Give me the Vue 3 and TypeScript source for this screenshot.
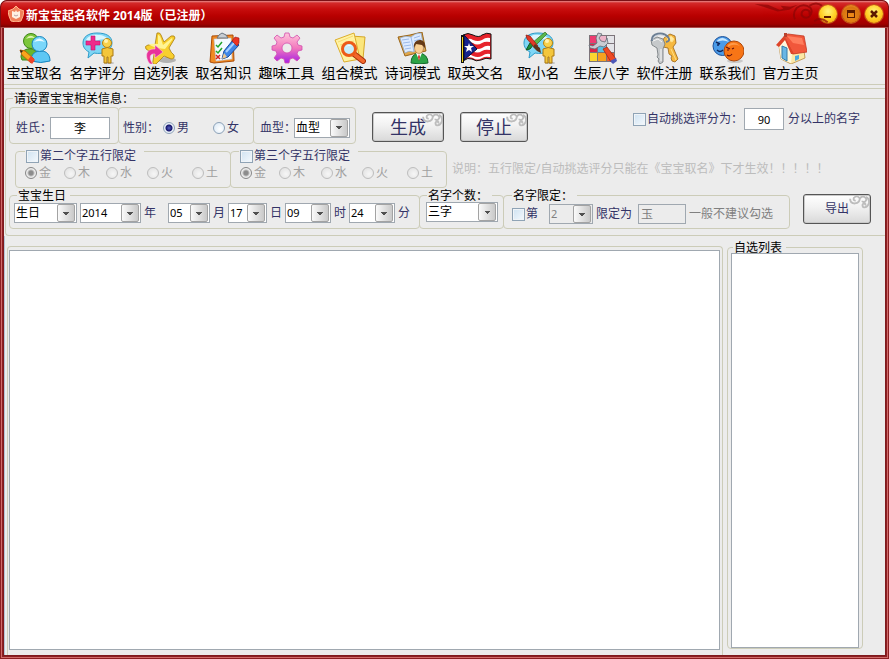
<script setup lang="ts">
import { ref } from 'vue'

interface Tool {
  label: string
  art: string
}

const bubble =
  '<path d="M15 1C6 1 1 5 1 11c0 4 2 7 6 9l-1 6 6-5c10 2 18-3 18-10S24 1 15 1Z" fill="#7fd6f5" stroke="#2c9cc9"/><path d="M4 8c2-4 7-6 12-5 5 0 9 2 10 5-7-3-15 4-22 0Z" fill="#d9f6ff"/>'
const figure =
  '<ellipse cx="27" cy="31" rx="5" ry="1" fill="#999" opacity=".6"/><path d="M20 17q5-3 11 0v7h-2v7h-3v-6h-1v6h-3v-7h-2Z" fill="#f3c63c" stroke="#a97913"/><circle cx="25" cy="11" r="4.5" fill="#f8d14b" stroke="#b98312"/><circle cx="24" cy="9" r="2" fill="#fff2b0"/>'

const tools: Tool[] = [
  {
    label: '宝宝取名',
    art: '<path d="M2 25c0-6 5-9 11-8l6 3-5 8H3Z" fill="#69b52c" stroke="#3d8417"/><circle cx="12" cy="9" r="7.5" fill="#7cc63a" stroke="#3d8417"/><path d="M7 7q4-6 9-1-5-1-9 1Z" fill="#dff5b4"/><path d="M12 29c0-7 4-10 10-10s9 4 9 10q-9 3-19 0Z" fill="#5ec7f4" stroke="#1683bd"/><circle cx="20.500" cy="12" r="7.500" fill="#7ad7fa" stroke="#1683bd"/><path d="M15 10q5-7 11 0-6-2-11 0Z" fill="#e8fbff"/><path d="M1 18l5 1 9 8-3 4-9-8Z" fill="#f9a51c" stroke="#bd6508"/><path d="M1 18l3 1-2 2Z" fill="#222"/><path d="M12 24l4 4-3 4-4-4Z" fill="#ef4128"/>',
  },
  {
    label: '名字评分',
    art: bubble + '<path d="M9 4h4v5h5v4h-5v5H9v-5H4V9h5Z" fill="#ee2b8c" stroke="#c01468" stroke-width=".6"/>' + figure,
  },
  {
    label: '自选列表',
    art: '<ellipse cx="22" cy="28" rx="9" ry="3" fill="#777" opacity=".5"/><path d="M12 1q3-1 4 2l3 7 7-6q4-1 4 2l-6 10q2 5 5 7 1 4-3 4l-7-3-3 3-5 5q-4 1-3-3l1-7-8-5q-2-3 2-4l7 0Z" fill="#f8cf2e" stroke="#a97d10" stroke-width=".8" stroke-linejoin="round"/><path d="M13 3q2 0 3 4l2 6 9-7q1 1 0 2l-7 9-8-1-8-3q0-2 9-1Z" fill="#fff493"/><path d="M5 32C-1 25 1 16 10 17v-4l8 7-8 6v-4c-6-1-6 5-2 10Z" fill="#e8329a" stroke="#fbd3e8" stroke-width=".5"/>',
  },
  {
    label: '取名知识',
    art: '<path d="M4 4l21-1 1 26-20 2-4-1Z" fill="#f18a22" stroke="#a94c08"/><path d="M6 7l17-1 1 21-16 2Z" fill="#f5faff" stroke="#b7c5d4" stroke-width=".6"/><path d="M9 6l2-3 3-2 4 2 2 3Z" fill="#c8ced4" stroke="#69747f"/><path d="M8 13l2 2 4-5M8 19l2 2 4-5" fill="none" stroke="#22a52b" stroke-width="1.500"/><path d="M8 23l4 4m0-4l-4 4" stroke="#d42222" stroke-width="1.500"/><path d="M14 27l2-8L25 8l6 5-11 12Z" fill="#3f86e8" stroke="#144a9e"/><path d="M18 20l9-10" stroke="#a7d1ff" stroke-width="2"/><path d="M24 9l3-4 4 1v5l-2 3Z" fill="#ec3323" stroke="#9c160c" stroke-width=".6"/><path d="M14 27l2-6 3 4Z" fill="#edc68d"/>',
  },
  {
    label: '趣味工具',
    art: '<defs><linearGradient id="gear" x1="0" y1="0" x2="0" y2="1"><stop offset="0" stop-color="#ffc6dc"/><stop offset=".5" stop-color="#f279bd"/><stop offset="1" stop-color="#a61fe4"/></linearGradient></defs><path d="M13 5l1-4h4l1 4 3 1 4-3 3 3-3 4 1 3 4 1v4l-4 1-1 3 3 4-3 3-4-3-3 1-1 4h-4l-1-4-3-1-4 3-3-3 3-4-1-3-4-1v-4l4-1 1-3-3-4 3-3 4 3Zm3 6a5 5 0 100 10 5 5 0 000-10Z" fill="url(#gear)" stroke="#d24fae" stroke-width=".8" fill-rule="evenodd"/>',
  },
  {
    label: '组合模式',
    art: '<path d="M17 4l14 1-2 22-12 1Z" fill="#fbe67c" stroke="#d5a726"/><path d="M1 8l19-7 6 26-16 3Z" fill="#fff3a3" stroke="#dcae2d"/><path d="M4 10l15-6M6 13l14-4" stroke="#f7dc71"/><path d="M20 22l9 7" stroke="#a5300a" stroke-width="6" stroke-linecap="round"/><path d="M20 22l9 7" stroke="#f3682c" stroke-width="4" stroke-linecap="round"/><circle cx="15" cy="17" r="6.500" fill="#c8eefa" stroke="#ec5b18" stroke-width="3"/><path d="M11 16q3-5 7-2-5-1-7 2Z" fill="#fff"/>',
  },
  {
    label: '诗词模式',
    art: '<path d="M1 5l12-2 12-3 4 19-13 3-8 2Z" fill="#e1a84c" stroke="#9a6518"/><path d="M3 6q6-3 11-1 4-4 10-4l3 16q-8 0-11 3-4-2-8 1Z" fill="#dceafe" stroke="#7e9fcb" stroke-width=".6"/><path d="M14 5l3 15M5 8l7-1M6 11l7-1M7 14l7-1M8 17l6-1M17 6l6-2M17 9l7-2M18 12l7-2" stroke="#9dbbe9"/><path d="M14 31q0-9 8-10 9 1 9 10-8 2-17 0Z" fill="#2ca446" stroke="#13682a"/><path d="M19 21l3 7 3-7Z" fill="#fff"/><path d="M22 22l-1 3 1 4 1-4Z" fill="#d52b21"/><ellipse cx="22" cy="16" rx="4.500" ry="5.500" fill="#f9cf92" stroke="#a26b30" stroke-width=".6"/><path d="M17 16c-2-10 13-11 11 0l-3-3-6-1Z" fill="#643916"/>',
  },
  {
    label: '取英文名',
    art: '<path d="M3 3q5-3 10 0 6 3 9 0 5-3 9-1v25q-5-2-10 1-5 2-9-1-4-2-9 2Z" fill="#e6232b" stroke="#111"/><path d="M4 9q5-4 9-1 5 2 9 0 4-3 8-2v4q-5-1-8 1-5 3-9 0-5-2-9 1ZM4 17q5-4 9-1 5 2 9 0 4-3 8-2v4q-5-1-8 1-5 3-9 0-5-2-9 1ZM4 25q5-4 9-1 5 2 9 0 4-3 8-2v3q-5-1-8 1-5 3-9 0-5-2-9 1Z" fill="#fff"/><path d="M4 3l13 14L4 28Z" fill="#15248c" stroke="#080d3b"/><path d="M9 11l1 3h4l-3 2 1 4-3-2-3 2 1-4-3-2h4Z" fill="#fff"/><path d="M1 3h3v28H1Z" fill="#111"/><path d="M2 5h1v25H2Z" fill="#f4d51b"/>',
  },
  {
    label: '取小名',
    art: bubble + '<path d="M3 18l4-7 3-2 1 3-4 5Z" fill="#1a913b" stroke="#0e5721"/><path d="M9 11L22 0l2 2-12 12Z" fill="#5ab84b" stroke="#326f24" stroke-width=".7"/><path d="M3 3l4 1 8 10-3 2L4 7Z" fill="#e13827" stroke="#8e160c" stroke-width=".7"/><path d="M12 12l5 4 1 5-4-2-4-4Z" fill="#5c341c"/>' + figure,
  },
  {
    label: '生辰八字',
    art: '<path d="M3 3h26v27H3Z" fill="#7c747a"/><path d="M4 4h7v7H4Z" fill="#ed3c70"/><path d="M12 4h8v7h-8Z" fill="#edb3c8"/><path d="M21 4h7v7h-7ZM21 12h7v8h-7Z" fill="#e4e4e8"/><path d="M4 12h7v8H4Z" fill="#db2348"/><path d="M12 12h8v8h-8Z" fill="#59bfe2"/><path d="M4 21h7v8H4Z" fill="#fbd530"/><path d="M12 21h8v8h-8Z" fill="#f6a220"/><path d="M21 21h7v8h-7Z" fill="#ed5a2d"/><path d="M12 1l4 1-3 4 2 3 4 1 2-4 1 5-4 4-4-1-5 3-5-1-1-3 4 1 4-3-1-5Z" fill="#c9cdd3" stroke="#646b75" stroke-width=".8"/><path d="M17 17l4-2 9 12-5 3Z" fill="#ee4924" stroke="#a41f0d" stroke-width=".7"/><path d="M24 29l6-3 1 3-4 3Z" fill="#4c58b8"/>',
  },
  {
    label: '软件注册',
    art: '<path d="M16 5l5-3 5 2 1 7-3 4 5 12-3 3-3-1-1-3 1-2-3-2-1-6-5-1-2-5Z" fill="#f6b840" stroke="#9a6414" stroke-width=".8"/><path d="M18 7l4-3 3 3-2 3ZM22 17l5 11" fill="#ffe9a1" stroke="#ffdf86"/><path d="M2 8l6-3 6 2 2 5-2 5v13l-3 2-2-3 1-2-2-2 1-2-1-7-5-3Z" fill="#c6c9cb" stroke="#6f7578" stroke-width=".8"/><path d="M12 17v12M4 9l5-2 4 3" stroke="#f7f7f7" fill="none"/><path d="M3 9C2 1 14-1 19 5q3 4-2 5" fill="none" stroke="#6c7f94" stroke-width="2"/><path d="M4 8C4 2 14 1 18 6" fill="none" stroke="#b6c6d7" stroke-width=".7"/>',
  },
  {
    label: '联系我们',
    art: '<ellipse cx="23" cy="29" rx="8" ry="2" fill="#999" opacity=".4"/><circle cx="10.500" cy="14" r="9.500" fill="#4a9be8" stroke="#1a5099"/><path d="M4 10q6-8 13 0-6-3-13 0Z" fill="#c5e6ff"/><path d="M4 10l4 2M5 13h2M5 18q3 3 6 0" stroke="#10275d" fill="none" stroke-width="1.500"/><circle cx="22" cy="19" r="10" fill="#f77516" stroke="#ae470a"/><path d="M16 13q6-5 12 1-7-3-12 1Z" fill="#ff9a48"/><path d="M14 15l4 2M15 18h2M20 17l2-1M15 23q3 2 5-1" stroke="#64130f" fill="none" stroke-width="1.200"/>',
  },
  {
    label: '官方主页',
    art: '<path d="M4 14l9 2 4 6 12-3 1 7-14 6-10-5Z" fill="#fce8a6" stroke="#b98c43" stroke-width=".8"/><path d="M4 14l5-9 8 17-1 9-10-4Z" fill="#fff8dc"/><path d="M7 14l5 2v13l-5-3Z" fill="#69b7e4" stroke="#347da9"/><path d="M20 24l4-1v4l-4 2Z" fill="#4ca9dd"/><path d="M9 4l4-2 16 2 3 16-14 2Z" fill="#f1573b" stroke="#c43a24" stroke-width=".8"/><path d="M12 4l15 2 2 7-11-2Z" fill="#ff7d5d"/><path d="M9 4L1 13l3 2 6-7 6 14 3 0Z" fill="#de4429"/><path d="M9 1h3v4H9Z" fill="#b9432f"/>',
  },
]

const elements: string[] = ['金', '木', '水', '火', '土']
const surname = ref('李')
const gender = ref('男')
const second = ref('金')
const third = ref('金')
const score = ref('90')
</script>

<template>
  <div class="window">
    <header class="titlebar">
      <svg class="logo" viewBox="0 0 16 16" aria-hidden="true">
        <path d="M8 0l3 3 5 2-1 5-2 5-5 1-5-1-2-5-1-5 5-2Z" fill="#f0805a" stroke="#ffb48c" />
        <path d="M4 5l3 1 1-2 1 2 3-1v6l-4 2-4-2Z" fill="#fff0e2" />
        <path d="M6 9l2 1 2-1" fill="none" stroke="#b9a0a6" />
      </svg>
      <h1>新宝宝起名软件 2014版（已注册）</h1>
      <svg class="clouds" viewBox="0 0 84 27" aria-hidden="true">
        <path d="M0 3l14 1 12 5 4-1-3-3 10 1 8-2-9 5-12 2-12-4Z" />
        <path class="stroke" d="M57 14q1-5-4-5-5 1-4 6 4 4 8 1 4-5 1-9-7-5-14 0-5 6-2 12M57 5q7-5 13 0M62 21q6-5 14 1M61 25h20" />
      </svg>
      <div class="controls">
        <button type="button" aria-label="最小化">
          <svg viewBox="0 0 18 18"><path d="M5 11h7v2H5Z" fill="#5b1a00" /></svg>
        </button>
        <button type="button" class="amber" aria-label="最大化">
          <svg viewBox="0 0 18 18"><path d="M5 5h8v8H5Zm1 3v4h6V8Z" fill="#5b1a00" fill-rule="evenodd" /></svg>
        </button>
        <button type="button" aria-label="关闭">
          <svg viewBox="0 0 18 18"><path d="M6 6l6 6m0-6l-6 6" stroke="#5b1a00" stroke-width="2.500" /></svg>
        </button>
      </div>
    </header>

    <div class="client">
      <nav class="toolbar">
        <button v-for="tool in tools" :key="tool.label" type="button">
          <svg viewBox="0 0 32 32" aria-hidden="true" v-html="tool.art"></svg>
          <span>{{ tool.label }}</span>
        </button>
      </nav>

      <div class="settings-wrap">
        <fieldset class="settings">
          <legend>请设置宝宝相关信息：</legend>

          <div class="row basics">
            <div class="box surname">
              <label for="surname">姓氏：</label>
              <input id="surname" v-model="surname" class="text" type="text" />
            </div>
            <div class="box gender" role="radiogroup" aria-label="性别">
              <span>性别：</span>
              <label><input v-model="gender" type="radio" name="gender" value="男" />男</label>
              <label><input v-model="gender" type="radio" name="gender" value="女" />女</label>
            </div>
            <div class="box blood">
              <label for="blood">血型：</label>
              <span class="combo"><select id="blood"><option>血型</option></select></span>
            </div>
            <button type="button" class="push big">
              生成
              <svg class="curl" viewBox="0 0 22 16" aria-hidden="true"><path d="M7 6q-3 0-2-3 3-3 6 0 1 5-5 6-5 0-5-5M11 5q1-4 5-3 4 2 1 5-3 1-3-1M18 2q4 2 3 7-2 5-6 4-2-3 1-4 2 0 1 2" /></svg>
            </button>
            <button type="button" class="push big stop">
              停止
              <svg class="curl" viewBox="0 0 22 16" aria-hidden="true"><path d="M7 6q-3 0-2-3 3-3 6 0 1 5-5 6-5 0-5-5M11 5q1-4 5-3 4 2 1 5-3 1-3-1M18 2q4 2 3 7-2 5-6 4-2-3 1-4 2 0 1 2" /></svg>
            </button>
            <div class="auto">
              <label class="check"><input type="checkbox" />自动挑选评分为：</label>
              <input id="score" v-model="score" class="text" type="text" aria-label="评分" />
              <label for="score">分以上的名字</label>
            </div>
          </div>

          <div class="row limits">
            <fieldset class="element">
              <legend><label class="check"><input type="checkbox" />第二个字五行限定</label></legend>
              <div class="choices">
                <label v-for="name in elements" :key="name">
                  <input v-model="second" type="radio" name="second" :value="name" disabled />{{ name }}
                </label>
              </div>
            </fieldset>
            <fieldset class="element">
              <legend><label class="check"><input type="checkbox" />第三个字五行限定</label></legend>
              <div class="choices">
                <label v-for="name in elements" :key="name">
                  <input v-model="third" type="radio" name="third" :value="name" disabled />{{ name }}
                </label>
              </div>
            </fieldset>
            <p class="note">说明：五行限定/自动挑选评分只能在《宝宝取名》下才生效！！！！！</p>
          </div>

          <div class="row details">
            <fieldset class="birthday">
              <legend>宝宝生日</legend>
              <div class="line">
                <span class="combo kind"><select aria-label="生日类型"><option>生日</option></select></span>
                <span class="combo num year"><select id="year"><option>2014</option></select></span>
                <label for="year">年</label>
                <span class="combo num month"><select id="month"><option>05</option></select></span>
                <label for="month">月</label>
                <span class="combo num day"><select id="day"><option>17</option></select></span>
                <label for="day">日</label>
                <span class="combo num"><select id="hour"><option>09</option></select></span>
                <label for="hour">时</label>
                <span class="combo num"><select id="minute"><option>24</option></select></span>
                <label for="minute">分</label>
              </div>
            </fieldset>
            <fieldset class="count">
              <legend>名字个数：</legend>
              <span class="combo"><select aria-label="名字个数"><option>三字</option></select></span>
            </fieldset>
            <fieldset class="restrict">
              <legend>名字限定：</legend>
              <div class="line">
                <label class="check"><input type="checkbox" />第</label>
                <span class="combo num off"><select aria-label="第几个字" disabled><option>2</option></select></span>
                <label for="word">限定为</label>
                <input id="word" class="text" type="text" value="玉" disabled />
                <span class="hint">一般不建议勾选</span>
              </div>
            </fieldset>
            <button type="button" class="push export">
              导出
              <svg class="curl" viewBox="0 0 22 16" aria-hidden="true"><path d="M7 6q-3 0-2-3 3-3 6 0 1 5-5 6-5 0-5-5M11 5q1-4 5-3 4 2 1 5-3 1-3-1M18 2q4 2 3 7-2 5-6 4-2-3 1-4 2 0 1 2" /></svg>
            </button>
          </div>
        </fieldset>
      </div>

      <main class="results">
        <div class="output">
          <textarea aria-label="起名结果" readonly></textarea>
        </div>
        <fieldset class="picked">
          <legend>自选列表</legend>
          <select size="2" aria-label="自选列表"></select>
        </fieldset>
      </main>
    </div>
  </div>
</template>

<style>
body {
  margin: 0;
  background: #fff;
}
</style>

<style scoped>
* {
  box-sizing: border-box;
}

.window {
  display: flex;
  flex-direction: column;
  height: 100vh;
  overflow: hidden;
  border-radius: 7px 7px 0 0;
  background: #8c1f22;
  color: #333366;
  font-family: "Noto Sans", "Noto Sans CJK SC", sans-serif;
  font-size: 12px;
  line-height: 14px;
  white-space: nowrap;
}

button,
input,
select,
textarea {
  margin: 0;
  border-radius: 0;
  color: inherit;
  font: inherit;
}

.titlebar {
  display: flex;
  flex: none;
  align-items: center;
  height: 28px;
  padding: 0 5px 0 7px;
  border: 1px solid #7c1015;
  border-bottom: 1px solid #b04b4b;
  border-radius: 7px 7px 0 0;
  background: linear-gradient(#e88a8a 0, #d42a2a 2px, #c80d0d 8px, #b80000 15px, #a00000 23px, #780000 26px);
}

.logo {
  width: 16px;
  height: 16px;
}

h1 {
  flex: 1;
  margin: 0 0 0 2px;
  padding-top: 4px;
  color: #fff;
  font-size: 12px;
  line-height: 16px;
}

.clouds {
  width: 84px;
  height: 26px;
  margin-right: -18px;
  fill: #8a0505;
  opacity: 0.7;
}

.clouds .stroke {
  fill: none;
  stroke: #8a0505;
  stroke-width: 2;
}

.controls {
  display: flex;
  gap: 5px;
}

.controls button {
  width: 18px;
  height: 18px;
  padding: 0;
  border: 0;
  border-radius: 50%;
  background: radial-gradient(circle at 50% 35%, #fff27a, #ffd027 50%, #f09c0b);
  box-shadow: 0 0 0 1px #c0561a;
}

.controls button.amber {
  background: radial-gradient(circle at 50% 60%, #f08c1a, #d87410 60%, #ffb142);
}

.controls svg {
  display: block;
}

.client {
  display: flex;
  flex: 1;
  flex-direction: column;
  min-height: 0;
  margin: 0 4px 4px;
  background: #ececec;
  box-shadow: 0 0 0 1px #7f1a1e, 0 0 0 2px #8c1f22, 0 0 0 3px #cf6b6b;
}

.titlebar {
  position: relative;
}

.toolbar {
  display: flex;
  flex: none;
  height: 57px;
  padding-top: 4px;
  border-bottom: 1px solid #ccccb8;
}

.toolbar button {
  display: flex;
  flex: none;
  flex-direction: column;
  align-items: center;
  width: 63px;
  padding: 0;
  border: 0;
  background: none;
  color: #000;
  font-size: 14px;
  line-height: 18px;
}

.toolbar button:first-child {
  margin-left: -1px;
}

.toolbar svg {
  width: 32px;
  height: 32px;
}

fieldset {
  min-width: 0;
  margin: 0;
  padding: 0;
  border: 1px solid #ccccb8;
  border-radius: 4px;
}

legend {
  height: 12px;
  padding: 0 4px 0 1px;
  color: #000;
}

.settings-wrap {
  flex: none;
  margin-top: 3px;
  padding: 3px 0 0 1px;
  border-top: 1px solid #ccccb8;
}

.settings {
  padding: 3px 0 6px 3px;
  border-right: 0;
  border-radius: 4px 0 0 4px;
}

.settings > legend {
  margin-left: 4px;
}

.row {
  display: flex;
}

.basics {
  height: 37px;
}

.box {
  display: flex;
  flex: none;
  align-items: center;
  padding-top: 4px;
  border: 1px solid #ccccb8;
  border-radius: 4px;
}

.box + .box {
  margin-left: -1px;
}

.surname {
  width: 110px;
  padding-left: 6px;
}

.gender {
  width: 136px;
  padding-left: 4px;
}

.gender label:first-of-type {
  margin-left: 4px;
}

.gender label + label {
  margin-left: 24px;
}

.blood {
  width: 103px;
  padding-left: 6px;
}

.text {
  height: 22px;
  padding: 0;
  border: 1px solid #a0a8b0;
  background: #fff;
  color: #000;
  text-align: center;
}

.surname .text {
  width: 60px;
  margin-left: -2px;
}

.blood .combo {
  width: 56px;
  margin-left: -2px;
}

input[type="radio"] {
  width: 12px;
  height: 12px;
  margin: 0 2px 0 0;
  border: 1px solid #8da2b8;
  border-radius: 50%;
  background: radial-gradient(circle at 60% 60%, #fff, #d6e6f4);
  appearance: none;
}

input[type="radio"]:checked {
  background: radial-gradient(circle, #5560c0 0, #16166c 3px, #eaf0f8 4px);
}

input[type="radio"]:disabled {
  border-color: #bdbdbd;
  background: radial-gradient(circle at 60% 60%, #f6f6f6, #dedede);
}

input[type="radio"]:checked:disabled {
  border-color: #888;
  background: radial-gradient(circle, #8c8c8c 0, #8c8c8c 2px, #ececec 4px);
}

.box label,
.choices label,
.check {
  display: flex;
  align-items: center;
}

input[type="checkbox"] {
  width: 13px;
  height: 13px;
  margin: 0 1px 0 0;
  border: 1px solid #8fa3b5;
  background: linear-gradient(135deg, #cfe2f1, #f4f9fd);
  box-shadow: inset 0 0 0 1px #f0f4f8;
  appearance: none;
}

.combo {
  display: grid;
  flex: none;
  width: 46px;
  height: 20px;
}

.combo select {
  grid-area: 1 / 1;
  width: 100%;
  height: 20px;
  padding: 0 0 0 1px;
  border: 1px solid #a0a8b0;
  background: #fff;
  color: #000;
  line-height: 16px;
  appearance: none;
}

.combo.num select {
  font-size: 11px;
}

.combo::after {
  grid-area: 1 / 1;
  align-self: center;
  justify-self: end;
  width: 16px;
  height: 16px;
  margin-right: 2px;
  border: 1px solid #a3a3a3;
  border-radius: 2px;
  background:
    conic-gradient(from -45deg at 50% 100%, #505050 25%, transparent 0) center / 6px 3px no-repeat,
    linear-gradient(90deg, #fafafa, #c9c9c9);
  content: "";
  pointer-events: none;
}

.combo.off select {
  background: #ececec;
  color: #808080;
  opacity: 1;
}

.push {
  position: relative;
  flex: none;
  width: 68px;
  height: 30px;
  padding: 0;
  border: 1px solid #555;
  border-radius: 3px;
  background: linear-gradient(#fff, #f1f1f1 45%, #d9d9d9);
  box-shadow: inset 0 0 0 1px #c9c9c9;
}

.push.big {
  width: 72px;
  margin: 5px 0 0 16px;
  font-size: 18px;
  line-height: 18px;
}

.push.big.stop {
  width: 68px;
}

.curl {
  position: absolute;
  top: 0;
  right: 0;
  width: 21px;
  height: 15px;
  fill: none;
  stroke: #bdbdbd;
  stroke-width: 2;
}

.auto {
  display: flex;
  align-items: center;
  height: 24px;
  margin-left: auto;
  padding-right: 25px;
}

.auto .text {
  width: 40px;
  margin: 0 4px 0 1px;
  font-size: 11px;
}

.limits {
  height: 39px;
  margin-top: 5px;
  padding-left: 6px;
}

.element {
  flex: none;
  width: 216px;
  height: 39px;
}

.element + .element {
  width: 217px;
  margin-left: -1px;
}

.element legend {
  height: 4px;
  margin-left: 9px;
  padding-right: 8px;
}

.element + .element legend {
  margin-left: 8px;
}

.element .check {
  height: 14px;
  color: #333366;
}

.choices {
  display: grid;
  grid-template-columns: 39px 42px 41px 45px auto;
  padding: 13px 0 0 9px;
  color: #a0a0a0;
}

.note {
  margin: 13px 0 0 5px;
  color: #bcbcbc;
}

.details {
  height: 40px;
  margin-top: 1px;
}

.details fieldset {
  flex: none;
  height: 40px;
}

.details fieldset + fieldset {
  margin-left: -1px;
}

.line {
  display: flex;
  align-items: center;
  gap: 3px;
}

.birthday {
  width: 411px;
  padding: 2px 0 0 4px;
}

.birthday legend {
  margin-left: 3px;
}

.kind {
  width: 63px;
}

.year {
  width: 61px;
}

.month {
  width: 42px;
  margin-left: 9px;
}

.day {
  width: 39px;
}

.count {
  width: 85px;
  padding: 1px 0 0 6px;
}

.count legend {
  margin-left: 1px;
}

.count .combo {
  width: 72px;
}

.restrict {
  width: 287px;
  padding: 3px 0 0 8px;
}

.restrict .off {
  width: 44px;
  margin-left: 8px;
}

.restrict .text {
  width: 48px;
  height: 20px;
  margin-left: 3px;
  padding-left: 2px;
  background: #ececec;
  color: #808080;
  text-align: left;
}

.hint {
  color: #808080;
}

.export {
  margin: 5px 0 0 13px;
}

.results {
  display: flex;
  flex: 1;
  gap: 4px;
  min-height: 0;
  padding: 5px 22px 0 2px;
  border-left: 1px solid #b4c4d4;
}

.output {
  display: flex;
  flex: 1;
  margin-top: 5px;
  padding: 3px 2px 5px 1px;
  border: 1px solid #ccccb8;
  border-bottom: 0;
  border-radius: 4px 4px 0 0;
}

textarea {
  flex: 1;
  min-width: 0;
  padding: 3px;
  border: 1px solid #a0a8b0;
  outline: 0;
  background: #fff;
  resize: none;
}

.picked {
  width: 136px;
  margin-bottom: 6px;
  padding: 0 3px;
}

.picked legend {
  margin-left: 2px;
}

.picked select {
  display: block;
  width: 100%;
  height: 100%;
  border: 1px solid #a0a8b0;
  background: #fff;
}
</style>
